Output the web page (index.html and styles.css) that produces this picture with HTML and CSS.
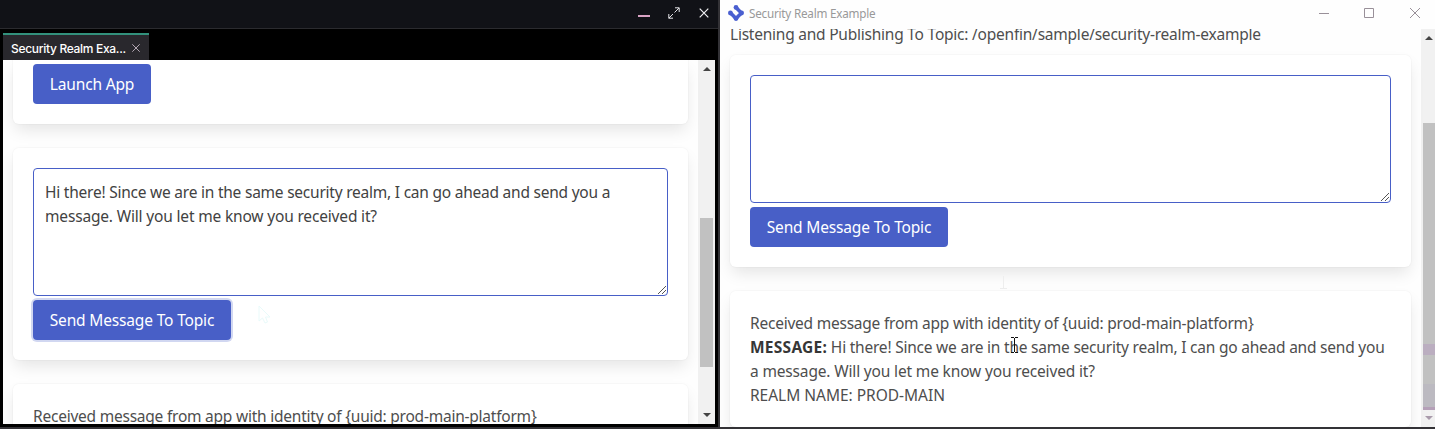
FILE: index.html
```html
<!DOCTYPE html>
<html lang="en">
<head>
<meta charset="utf-8">
<title>Security Realm Example</title>
<link rel="stylesheet" href="styles.css">
</head>
<body>
<div class="desktop">
  <section class="platform">
    <header class="platform-bar">
      <svg class="minimize" width="12" height="2" viewBox="0 0 12 2"><path d="M0 1h12" stroke="#d9a3c4" stroke-width="2"/></svg>
      <svg width="12" height="12" viewBox="0 0 12 12" fill="none" stroke="#e4e4e8"><path d="M6.5 5.5L11 1M7 .8h4.2V5M5 7L.8 11.2M.8 7v4.2H5"/></svg>
      <svg width="10" height="10" viewBox="0 0 10 10" stroke="#f1f1f4" stroke-width="1.2"><path d="M.7.7l8.6 8.6M9.3.7L.7 9.3"/></svg>
    </header>
    <div class="tabs">
      <div class="tab"><span class="tab-name">Security Realm Exa...</span>
        <svg width="8" height="8" viewBox="0 0 8 8" stroke="#b5a9b5"><path d="M.3.3l7.4 7.4M7.7.3L.3 7.7"/></svg>
      </div>
    </div>
    <div class="viewport platform-view">
      <main class="page">
        <article class="box launch"><button class="button launch-button"><span>Launch App</span></button></article>
        <article class="box">
          <div class="textarea"><p class="draft-one">Hi there! Since we are in the same security realm, I can go ahead and send you a</p><p class="draft-two">message. Will you let me know you received it?</p>
            <svg class="grip" width="8" height="8" viewBox="0 0 8 8" stroke="#555"><path d="M0 8L8 0M4 8L8 4"/></svg>
          </div>
          <button class="button focused"><span>Send Message To Topic</span></button>
          <svg class="ghost-pointer" width="13" height="20" viewBox="0 0 13 20" fill="none" stroke="#e9fafa"><path d="M1 1v15l3.5-3 2.5 5 2.5-1-2-5H12z"/></svg>
        </article>
        <article class="box received"><p class="received-line">Received message from app with identity of {uuid: prod-main-platform}</p></article>
      </main>
      <aside class="scrollbar">
        <svg class="arrow-up" width="8" height="4" viewBox="0 0 8 4"><path d="M4 0L8 4H0z" fill="#444"/></svg>
        <div class="thumb"></div>
        <svg class="arrow-down" width="8" height="4" viewBox="0 0 8 4"><path d="M4 4L8 0H0z" fill="#444"/></svg>
      </aside>
    </div>
  </section>
  <section class="app">
    <header class="app-bar">
      <svg class="logo" width="16" height="16" viewBox="0 0 16 16" fill="#4a5fd0"><path d="M8 2.6L13.4 8 8 13.4 2.6 8" fill="none" stroke="#4a5fd0" stroke-width="3.6" stroke-linejoin="round"/><circle cx="8" cy="2.4" r="2.4"/><circle cx="13.6" cy="8" r="2.4"/><circle cx="8" cy="13.6" r="2.4"/><circle cx="2.4" cy="8" r="2.4"/></svg>
      <span class="app-name">Security Realm Example</span>
      <svg class="app-controls" width="102" height="12" viewBox="0 0 102 12" fill="none" stroke="#999099"><path d="M0 6.5h10M45.5 1.5h9v9h-9zM91 1l10 10M101 1L91 11"/></svg>
    </header>
    <div class="viewport app-view">
      <main class="page">
        <p class="topic"><span>Listening and Publishing To Topic: /openfin/sample/security-realm-example</span></p>
        <article class="box compose">
          <div class="textarea"><svg class="grip" width="8" height="8" viewBox="0 0 8 8" stroke="#555"><path d="M0 8L8 0M4 8L8 4"/></svg></div>
          <button class="button"><span>Send Message To Topic</span></button>
          <svg class="ghost-caret" width="7" height="16" viewBox="0 0 7 16" fill="none" stroke="#eee"><path d="M3.5 3v12M0 15.5h7"/></svg>
        </article>
        <article class="box inbox">
          <p class="received-line">Received message from app with identity of {uuid: prod-main-platform}</p>
          <p class="message-one"><strong>MESSAGE:</strong> Hi there! Since we are in the same security realm, I can go ahead and send you</p>
          <p class="message-two">a message. Will you let me know you received it?</p>
          <p class="realm">REALM NAME: PROD-MAIN</p>
          <svg class="caret" width="7" height="16" viewBox="0 0 7 16" fill="none" stroke="#111"><path d="M0 .5h3M4 .5h3M3.5 1v14M0 15.5h3M4 15.5h3"/></svg>
        </article>
      </main>
      <aside class="scrollbar">
        <svg class="arrow-up" width="8" height="4" viewBox="0 0 8 4"><path d="M4 0L8 4H0z" fill="#444"/></svg>
        <div class="thumb"></div>
        <svg class="arrow-down" width="8" height="4" viewBox="0 0 8 4"><path d="M4 4L8 0H0z" fill="#a99bab"/></svg>
      </aside>
    </div>
  </section>
</div>
</body>
</html>
```
FILE: styles.css
```css
* { box-sizing: border-box; }
body { margin: 0; font: 15.5px/24px "Noto Sans", "Open Sans", sans-serif; color: #4e4e4e; background: #333236; overflow: hidden; }
p { margin: 0; white-space: nowrap; }
svg { display: block; flex: none; }
.desktop { display: flex; height: 429px; }
.platform { width: 718px; height: 427px; margin-right: 2px; background: #000; }
.platform-bar { height: 29px; background: #111217; border-bottom: 1px solid #2b2b2f; display: flex; align-items: center; justify-content: flex-end; padding: 0 9px 2px 0; gap: 19px; }
.platform-bar .minimize { margin: 6px -1px 0 0; }
.tabs { height: 31px; padding: 4px 0 0 3px; }
.tab { width: 146px; height: 27px; background: #29282d; border-top: 2px solid #32917c; display: flex; align-items: center; padding: 3px 0 0 8px; gap: 6px; color: #fff; font: 500 12px/16px Inter, "Liberation Sans", sans-serif; white-space: nowrap; }
.tab-name { letter-spacing: -.31px; width: 115px; }
.tab svg { margin-top: -2px; }
.viewport { display: flex; overflow: hidden; background: #fefefe; }
.platform-view { width: 712px; height: 364px; margin-left: 3px; }
.page { flex: 1; padding: 0 10px; min-width: 0; }
.box { position: relative; background: #fff; border-radius: 6px; padding: 20px; height: 212px; margin-bottom: 24px; box-shadow: 0 8px 16px -2px rgba(10,10,10,.1), 0 0 0 1px rgba(10,10,10,.02); }
.launch { height: 64px; padding-top: 4px; border-radius: 0 0 6px 6px; }
.textarea { position: relative; height: 128px; border: 1px solid #485fc7; border-radius: 4px; background: #fff; padding: 11px; color: #424242; }
.grip { position: absolute; right: 1px; bottom: 1px; }
.button { display: flex; align-items: center; justify-content: center; width: 198px; height: 40px; margin: 4px 0 0; padding: 0; border: 0; border-radius: 4px; background: #485fc7; color: #fff; font: inherit; letter-spacing: -.16px; white-space: nowrap; }
.launch-button { width: 118px; margin-top: 0; }
.focused { box-shadow: 0 0 0 2px rgba(72,95,199,.25); }
.ghost-pointer { position: absolute; left: 245px; top: 157px; }
.scrollbar { width: 17px; background: #f1f1f1; display: flex; flex-direction: column; align-items: center; padding-top: 7px; }
.platform-view .thumb { width: 13px; height: 149px; margin-top: 147px; background: #c1c1c1; }
.platform-view .arrow-down { margin-top: 46px; }
.app { width: 715px; height: 427px; background: #fefefe; }
.app-bar { height: 29px; display: flex; align-items: center; padding: 0 14px 3px 8px; color: #999; font-size: 11.7px; }
.app-name { margin-left: 5px; letter-spacing: -.22px; }
.app-controls { margin-left: auto; }
.app-view { width: 715px; height: 398px; }
.app-view .scrollbar { width: 14px; align-items: flex-end; padding-right: 0; }
.app-view .thumb { width: 12px; height: 287px; margin-top: 83px; background: linear-gradient(#c1c1c1 221px, #bbaec0 221px, #bbaec0 232px, #c1c1c1 232px, #c1c1c1 261px, #bcbac1 261px, #bcbac1 284px, #b5a0b8 284px); }
.app-view .arrow-up, .app-view .arrow-down { margin-right: 2px; }
.app-view .arrow-down { margin-top: 6px; }
.topic { height: 26px; overflow: hidden; letter-spacing: -.23px; }
.topic span { display: block; margin-top: -7px; }
.inbox { height: 136px; margin-bottom: 0; }
.caret { position: absolute; left: 281px; top: 46px; }
.ghost-caret { position: absolute; left: 270px; top: 218px; }
.draft-one, .received-line { letter-spacing: -.23px; }
.draft-two { letter-spacing: -.17px; }
.message-one { letter-spacing: -.22px; }
.message-one strong { letter-spacing: .25px; }
.message-two { letter-spacing: -.16px; }
.realm { letter-spacing: -.02px; }
strong { color: #363636; }
```
